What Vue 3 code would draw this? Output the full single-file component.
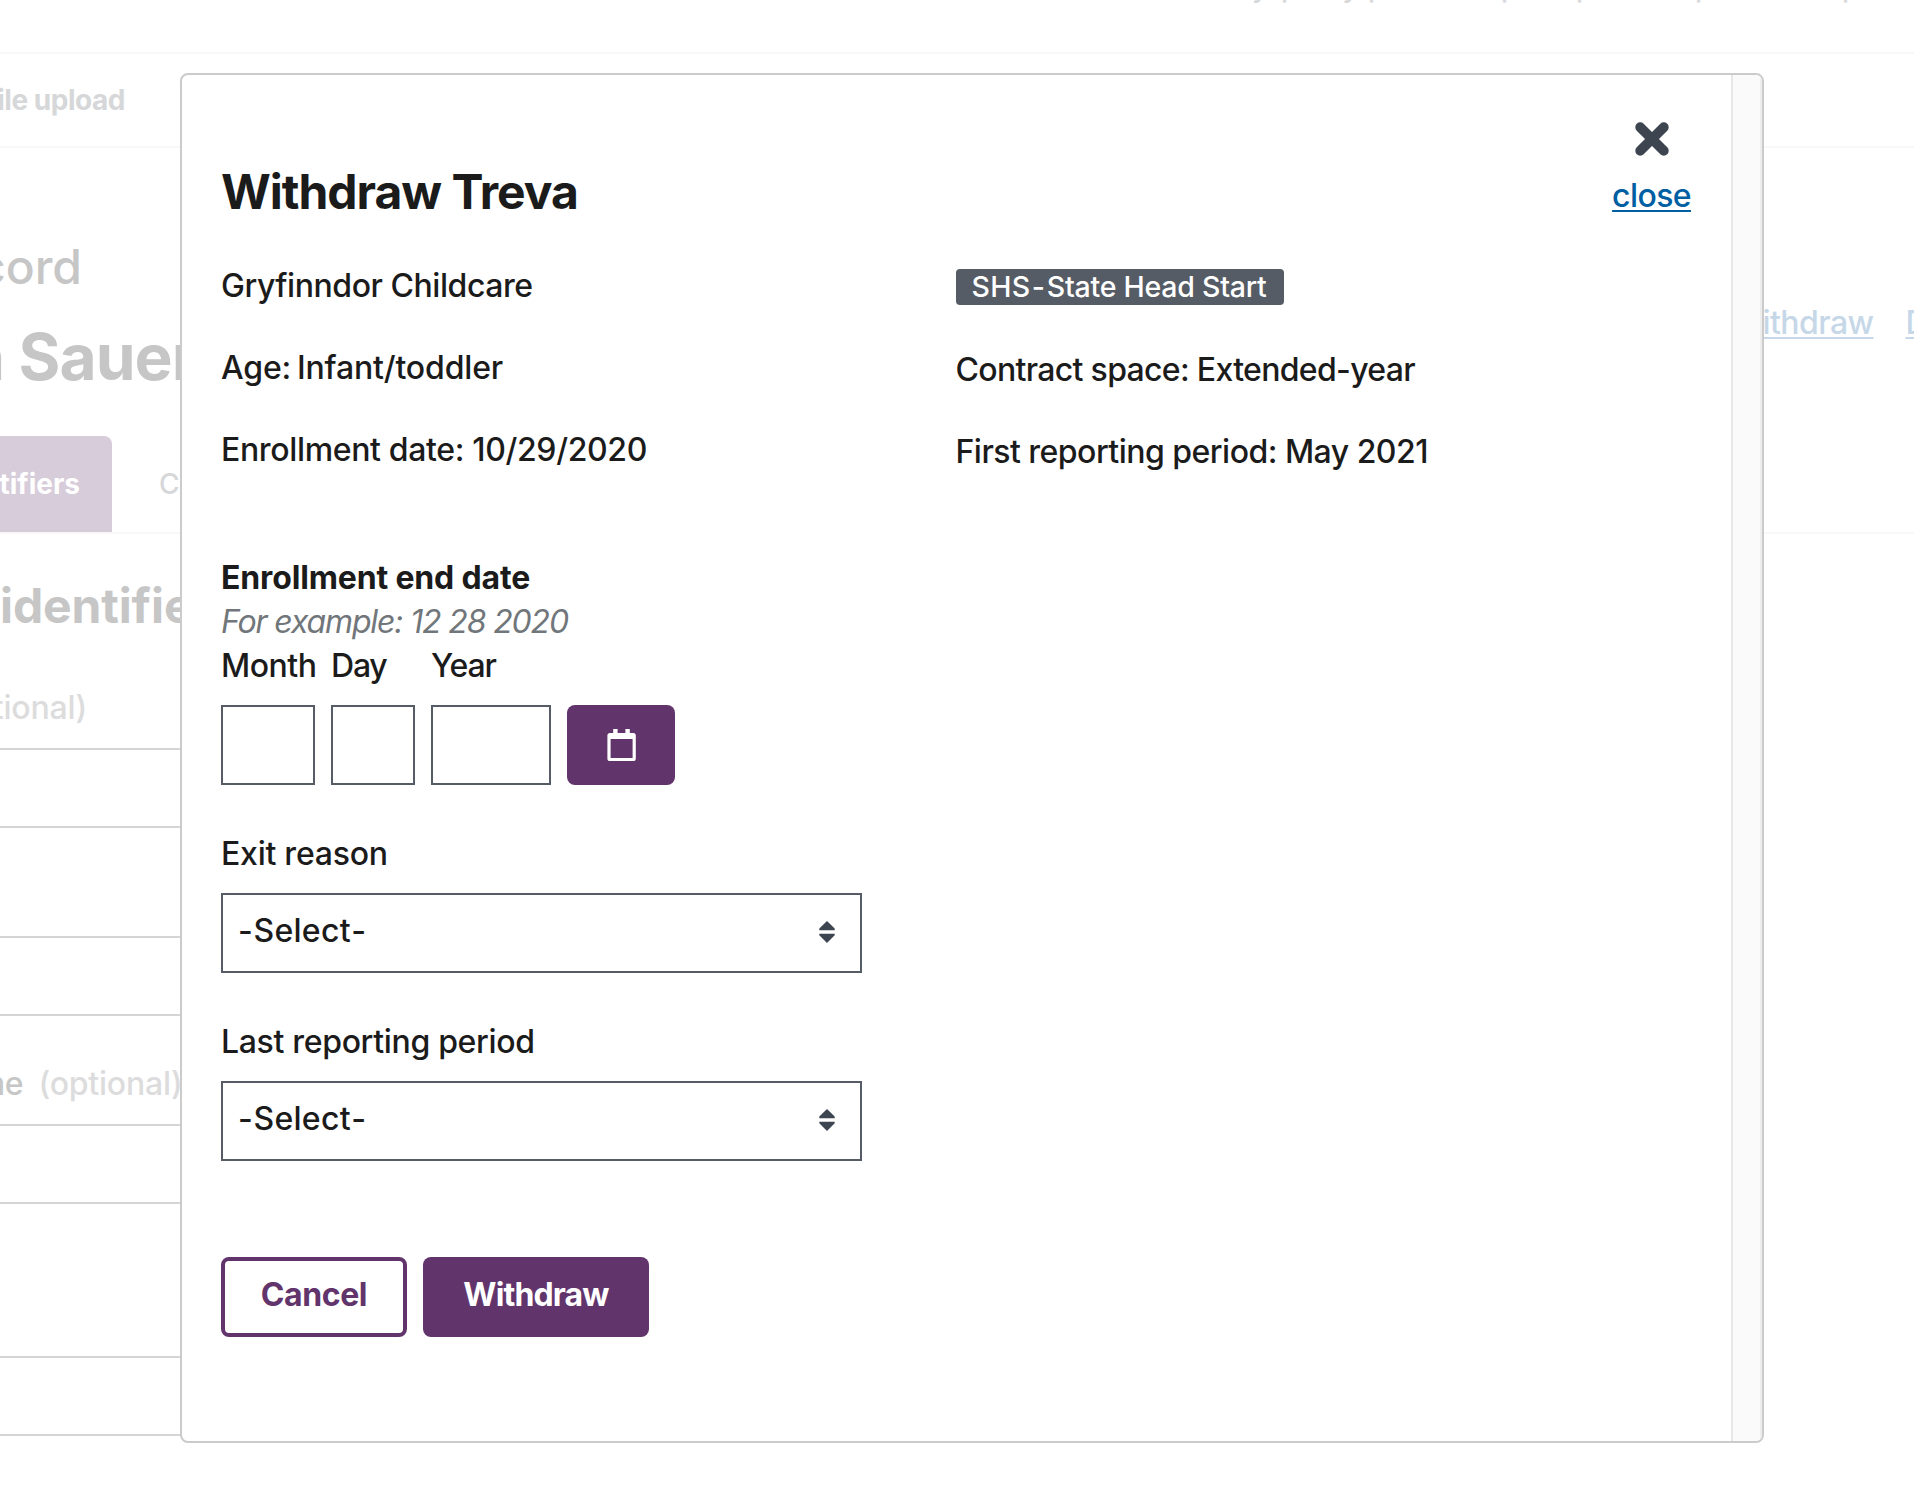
<script setup>
const dateParts = ['Month', 'Day', 'Year']
const selects = [
  { label: 'Exit reason', key: 'exit' },
  { label: 'Last reporting period', key: 'period' },
]
</script>

<template>
  <div class="screen">
    <div class="page">
      <div class="topbar">
        <span class="w-privacy">Privacy</span>
        <span class="w-policy">policy</span>
        <span class="w-provider">provider</span>
        <span class="w-plan">plan</span>
        <span class="w-public">public</span>
        <span class="w-partner">partner</span>
        <span class="w-portal">portal</span>
      </div>
      <nav class="nav"><div class="nav-link">File upload</div></nav>
      <div class="record">
        <div class="record-names">
          <div class="record-kind">Edit record</div>
          <div class="record-name">Susan Sauer</div>
        </div>
        <div class="record-actions">
          <div class="act-withdraw"><a>Withdraw</a></div>
          <a class="act-delete">Delete</a>
        </div>
      </div>
      <div class="tabs">
        <div class="tab active">Child identifiers</div>
        <div class="tab">Care</div>
      </div>
      <div class="form">
        <h2>identifiers</h2>
        <div class="field-label first">(optional)</div>
        <div class="box"></div>
        <div class="box second"></div>
        <div class="field-label middle">Middle name<span>(optional)</span></div>
        <div class="box"></div>
        <div class="box last"></div>
      </div>
    </div>

    <section class="modal" role="dialog">
      <div class="content">
        <header class="modal-head">
          <h1>Withdraw Treva</h1>
          <div class="closer">
            <svg width="34" height="34" viewBox="0 0 34 34"><path d="M5.200 5.200 28.800 28.800M28.800 5.200 5.200 28.800" stroke="#3d4551" stroke-width="9.800" stroke-linecap="round" /></svg>
            <a>close</a>
          </div>
        </header>

        <div class="details">
          <div class="col left">
            <p class="d1">Gryfinndor Childcare</p>
            <p class="d2">Age: Infant/toddler</p>
            <p class="d3">Enrollment date: 10/29/2020</p>
          </div>
          <div class="col right">
            <div class="badge"><span class="code">SHS - </span>State Head Start</div>
            <p class="d4">Contract space: Extended-year</p>
            <p class="d5">First reporting period: May 2021</p>
          </div>
        </div>

        <div class="legend">Enrollment end date</div>
        <div class="hint">For example: 12 28 2020</div>
        <div class="date-row">
          <label v-for="p in dateParts" :key="p" :class="['part', p.toLowerCase()]">
            <span>{{ p }}</span>
            <input type="text" />
          </label>
          <button class="cal" aria-label="Toggle calendar">
            <svg width="30" height="34" viewBox="0 0 30 34">
              <path fill="#fff" fill-rule="evenodd" d="M6.2 0h4.4v4h7.8V0h4.4v4h3.4q2.6 0 2.6 2.6v22.8q0 2.6-2.6 2.6H3q-2.6 0-2.6-2.6V6.600q0-2.6 2.600-2.600h3.200zM3.600 10v19h22V10z" />
            </svg>
          </button>
        </div>

        <div v-for="s in selects" :key="s.key" class="group">
          <div :class="['group-label', s.key]">{{ s.label }}</div>
          <div class="select">
            <span>- Select -</span>
            <svg width="16" height="22" viewBox="0 0 16 22"><path fill="#3d4551" d="M8 0 15.700 7.600V9.200H.3V7.600zM.3 12.700H15.700V14.300L8 22 .3 14.300z" /></svg>
          </div>
        </div>

        <div class="buttons">
          <button class="cancel">Cancel</button>
          <button class="withdraw">Withdraw</button>
        </div>
      </div>
      <div class="track"></div>
    </section>
  </div>
</template>

<style>
body { margin: 0; overflow: hidden; background: #fff; }
</style>

<style scoped>
* { box-sizing: border-box; }
.screen {
  position: relative;
  width: 1914px;
  height: 1502px;
  overflow: hidden;
  background: #fff;
  color: #1b1b1b;
  font: 450 32px/44px Inter, "Liberation Sans", sans-serif;
  white-space: nowrap;
}
h1, h2, p { margin: 0; }

/* dimmed page */
.page { width: 1914px; color: #c6c6c6; }
.topbar {
  display: flex;
  height: 54px;
  border-bottom: 2px solid #f7f7f7;
  font-size: 28px;
  line-height: 40px;
  color: #d6d7d9;
}
.topbar span { flex: none; margin-top: -33px; }
.w-privacy { width: 1281px; display: flex; justify-content: flex-end; padding-right: 13px; }
.w-policy { width: 87px; letter-spacing: -0.5px; }
.w-provider { width: 133px; }
.w-plan { width: 75px; }
.w-public { width: 119px; }
.w-partner { width: 147px; }
.nav { height: 94px; border-bottom: 2px solid #f7f7f7; padding-top: 24px; }
.nav-link {
  width: 125px;
  display: flex;
  justify-content: flex-end;
  font-size: 28px;
  line-height: 44px;
  font-weight: 700;
  letter-spacing: -0.47px;
  color: #d6d7d9;
}
.record { display: flex; height: 288px; }
.record-names { width: 197px; flex: none; padding-top: 89px; }
.record-kind {
  width: 82px;
  display: flex;
  justify-content: flex-end;
  font-size: 48px;
  line-height: 60px;
}
.record-name {
  display: flex;
  justify-content: flex-end;
  margin-top: 22px;
  font-size: 64px;
  line-height: 76px;
  font-weight: 700;
  letter-spacing: -0.9px;
}
.record-actions { display: flex; padding-top: 153px; color: #c6d7e8; letter-spacing: -0.56px; }
.record-actions a { text-decoration: underline; text-decoration-thickness: 2px; text-underline-offset: 3px; }
.act-withdraw { width: 1676.5px; display: flex; justify-content: flex-end; }
.act-delete { margin-left: 32px; }
.tabs { display: flex; height: 98px; border-bottom: 2px solid #f8f8f8; }
.tab {
  margin-left: 47px;
  padding-top: 26px;
  font-size: 28px;
  line-height: 44px;
  color: #d6d7d9;
}
.tab.active {
  width: 112px;
  height: 96px;
  margin-left: 0;
  padding-right: 32px;
  display: flex;
  justify-content: flex-end;
  border-top-right-radius: 8px;
  background: #d7ccda;
  color: #fff;
  font-weight: 700;
}
.form { width: 400px; padding-top: 42px; }
h2 { font-size: 48px; line-height: 60px; letter-spacing: -0.12px; }
.field-label { display: flex; justify-content: flex-end; color: #dcdcdd; letter-spacing: -0.23px; }
.field-label.first { width: 87px; margin-top: 50px; }
.box { height: 80px; border: 2px solid #d5d5d5; border-left: 0; margin-top: 18px; }
.box.second { margin-top: 108px; }
.field-label.middle { width: 182.5px; margin-top: 46px; color: #c6c6c6; }
.field-label.middle span { margin-left: 15px; color: #dcdcdd; }
.box.last { margin-top: 152px; }

/* modal */
.modal {
  position: absolute;
  left: 180px;
  top: 73px;
  width: 1584px;
  height: 1370px;
  display: flex;
  border: 2px solid #cbcbcb;
  border-radius: 8px;
  background: #fff;
  overflow: hidden;
}
.content { flex: 1; padding-left: 39px; }
.track {
  width: 31px;
  border-left: 2px solid #e7e7e7;
  border-right: 2px solid #ededed;
  background: #fafafa;
}
.modal-head { display: flex; justify-content: space-between; height: 190px; padding-right: 40px; }
h1 { margin-top: 89px; font-size: 48px; line-height: 56px; letter-spacing: -1.02px; }
.closer { display: flex; flex-direction: column; align-items: center; padding-top: 47px; }
.closer svg { display: block; margin-bottom: 18px; }
.closer a {
  color: #005ea2;
  letter-spacing: -0.6px;
  text-decoration: underline;
  text-decoration-thickness: 2px;
  text-underline-offset: 3px;
}
.details { display: flex; height: 291px; }
.details p { line-height: 40px; margin-bottom: 42px; }
.col.left { width: 734.5px; padding-top: 1px; }
.col.right { padding-top: 4px; }
.d1 { letter-spacing: -0.45px; }
.d2 { letter-spacing: -0.17px; word-spacing: -2.5px; }
.d3 { letter-spacing: -0.35px; }
.d4 { letter-spacing: -0.68px; }
.d5 { letter-spacing: -0.52px; }
.badge {
  width: 328px;
  height: 36px;
  margin-bottom: 45px;
  padding-left: 16px;
  border-radius: 4px;
  background: #565c65;
  color: #fff;
  font-size: 28.5px;
  line-height: 35px;
  letter-spacing: -0.23px;
  white-space: pre;
}
.badge .code { letter-spacing: 0.3px; word-spacing: -6.5px; }
.legend { font-weight: 700; letter-spacing: -0.15px; }
.hint { font-style: italic; color: #71767a; letter-spacing: -1.14px; }
.date-row { display: flex; gap: 16px; align-items: flex-end; }
.part { display: block; }
.part span { display: block; height: 61px; }
.part input {
  display: block;
  width: 100%;
  height: 80px;
  border: 2px solid #565c65;
  border-radius: 0;
  background: #fff;
}
.month { width: 94px; letter-spacing: -0.5px; }
.day { width: 84px; letter-spacing: -1.2px; }
.year { width: 120px; letter-spacing: -1.1px; }
button {
  height: 80px;
  border: 0;
  border-radius: 8px;
  background: #61356b;
  color: #fff;
  font: 700 32px/44px Inter, "Liberation Sans", sans-serif;
}
.cal { width: 108px; padding: 0 0 0 1px; }
.cal svg { display: block; margin: 2px auto 0; }
.group { padding-top: 47px; }
.group-label.exit { letter-spacing: -0.25px; }
.group-label.period { letter-spacing: -0.33px; }
.select {
  display: flex;
  justify-content: space-between;
  align-items: center;
  width: 641px;
  height: 80px;
  margin-top: 17px;
  padding: 0 25px 0 15px;
  border: 2px solid #565c65;
}
.select span { margin-top: -4px; letter-spacing: 0.3px; word-spacing: -8.5px; }
.select svg { margin-top: -2px; }
.buttons { display: flex; gap: 16px; margin-top: 96px; }
.buttons button { padding: 0 0 4px; }
.buttons .cancel { width: 186px; border: 4px solid #61356b; background: #fff; color: #61356b; letter-spacing: -0.41px; }
.buttons .withdraw { width: 226px; letter-spacing: -0.85px; }
</style>
